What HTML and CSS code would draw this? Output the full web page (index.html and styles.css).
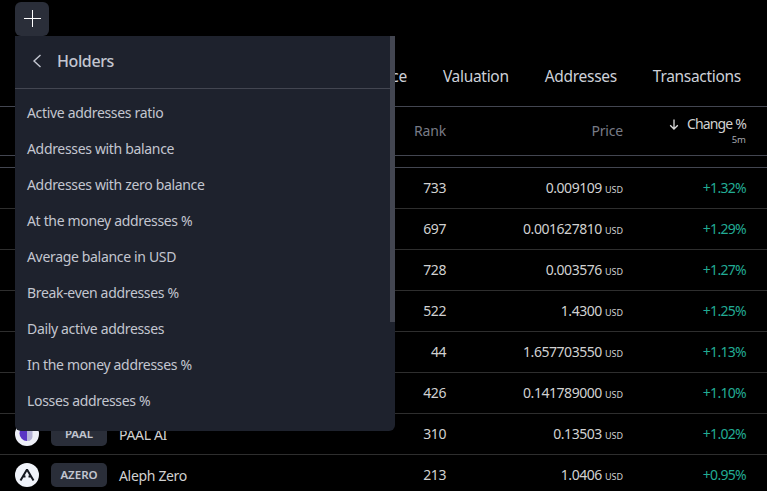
FILE: index.html
```html
<!DOCTYPE html>
<html lang="en">
<head>
<meta charset="utf-8">
<title>Holders</title>
<link rel="stylesheet" href="styles.css">
</head>
<body>
<div class="page">
  <div class="toolbar">
    <button class="add-btn" aria-label="Add">
      <svg width="18" height="18" viewBox="0 0 18 18"><path d="M9.5 0v17M1 8.5h17" stroke="#fff" stroke-width="1" fill="none"/></svg>
    </button>
  </div>
  <nav class="tabs">
    <span class="tab tab-perf">Performance</span>
    <span class="tab">Valuation</span>
    <span class="tab">Addresses</span>
    <span class="tab">Transactions</span>
  </nav>
  <div class="table">
    <div class="row head">
      <span class="c-rank">Rank</span>
      <span class="c-price">Price</span>
      <span class="c-change"><span class="ch-top"><svg class="arrow" width="10" height="11" viewBox="0 0 10 11"><path d="M5 .5v9.5M1.2 6.2 5 10l3.8-3.8" stroke="#dbdbdb" stroke-width="1.3" fill="none"/></svg>Change %</span><small>5m</small></span>
    </div>
    <div class="spacer"></div>
    <div class="row"><span class="c-rank">733</span><span class="c-price">0.009109<i>USD</i></span><span class="c-change up">+1.32%</span></div>
    <div class="row"><span class="c-rank">697</span><span class="c-price">0.001627810<i>USD</i></span><span class="c-change up">+1.29%</span></div>
    <div class="row"><span class="c-rank">728</span><span class="c-price">0.003576<i>USD</i></span><span class="c-change up">+1.27%</span></div>
    <div class="row"><span class="c-rank">522</span><span class="c-price">1.4300<i>USD</i></span><span class="c-change up">+1.25%</span></div>
    <div class="row"><span class="c-rank">44</span><span class="c-price">1.657703550<i>USD</i></span><span class="c-change up">+1.13%</span></div>
    <div class="row"><span class="c-rank">426</span><span class="c-price">0.141789000<i>USD</i></span><span class="c-change up">+1.10%</span></div>
    <div class="row">
      <span class="coin">
        <svg class="logo" width="24" height="24" viewBox="0 0 24 24"><circle cx="12" cy="12" r="12" fill="#eef0f8"/><path d="M12 4a7.5 7.5 0 0 0 0 15z" fill="#5a35c4"/><path d="M12 4h2.5a5 5 0 0 1 3 3v8a5 5 0 0 1-3 4H12z" fill="#b5b3d6"/></svg>
        <b class="tag">PAAL</b><span class="name">PAAL AI</span>
      </span>
      <span class="c-rank">310</span><span class="c-price">0.13503<i>USD</i></span><span class="c-change up">+1.02%</span>
    </div>
    <div class="row">
      <span class="coin">
        <svg class="logo" width="24" height="24" viewBox="0 0 24 24"><circle cx="12" cy="12" r="12" fill="#f0f3fa"/><path d="M12 6.5 18.5 17.5M12 6.5 5.5 17.5M8 13.5h2.5M13.5 13.5H16" stroke="#14171f" stroke-width="2" fill="none"/></svg>
        <b class="tag">AZERO</b><span class="name">Aleph Zero</span>
      </span>
      <span class="c-rank">213</span><span class="c-price">1.0406<i>USD</i></span><span class="c-change up">+0.95%</span>
    </div>
  </div>
  <aside class="menu">
    <header class="menu-head">
      <svg width="18" height="18" viewBox="0 0 18 18"><path d="M12.5 3 6 9l6.5 6" stroke="#c3c6d0" stroke-width="1.4" fill="none"/></svg>
      <span>Holders</span>
    </header>
    <ul class="menu-list">
      <li>Active addresses ratio</li>
      <li>Addresses with balance</li>
      <li>Addresses with zero balance</li>
      <li>At the money addresses %</li>
      <li>Average balance in USD</li>
      <li>Break-even addresses %</li>
      <li>Daily active addresses</li>
      <li>In the money addresses %</li>
      <li>Losses addresses %</li>
    </ul>
    <div class="scrollbar"></div>
  </aside>
</div>
</body>
</html>
```
FILE: styles.css
```css
* { box-sizing: border-box; }
html, body { margin: 0; height: 100%; background: #000; }
body { overflow: hidden; font-family: "Noto Sans", sans-serif; color: #d1d1d1; font-size: 14px; letter-spacing: -0.33px; }
.page { position: relative; width: 767px; height: 491px; overflow: hidden; }
.toolbar { height: 57px; padding: 2px 0 0 15px; }
.add-btn { width: 34px; height: 34px; border: 0; border-radius: 6px; background: #2a2e39; padding: 0; display: flex; align-items: center; justify-content: center; }
.tabs { height: 50px; display: flex; justify-content: flex-end; align-items: center; gap: 36px; padding: 0 26px 11px 0; border-bottom: 1px solid #434651; font-size: 15.5px; letter-spacing: -0.3px; color: #cdd0d8; line-height: 38px; }
.table { display: flex; flex-direction: column; }
.row { height: 41px; display: flex; align-items: center; padding: 0 21px 2px 15px; border-bottom: 1px solid #2e2e2e; }
.row .coin { margin-bottom: -2px; }
.head { height: 49px; color: #787b86; border-bottom-color: #434651; padding-bottom: 2px; }
.spacer { height: 12px; border-bottom: 1px solid #434651; }
.coin { display: flex; align-items: center; width: 0; white-space: nowrap; }
.logo { flex: none; }
.tag { flex: none; margin-left: 12px; width: 56px; height: 24px; border-radius: 5px; background: #2a2e39; font-size: 11.5px; letter-spacing: 0; font-weight: 600; line-height: 24px; color: #c3c6d0; text-align: center; }
.name { margin-left: 12px; color: #d1d1d1; }
.c-rank { margin-left: auto; width: 431px; text-align: right; letter-spacing: -0.45px; }
.c-price { width: 177px; text-align: right; letter-spacing: -0.45px; }
.c-price i { font-style: normal; font-size: 9px; letter-spacing: 0; margin-left: 3px; }
.c-change { width: 123px; text-align: right; letter-spacing: -0.7px; }
.up { color: #22ab94; }
.head .c-rank, .head .c-price { letter-spacing: -0.2px; }
.head .c-change { display: flex; flex-direction: column; align-items: flex-end; color: #d1d1d1; line-height: 16px; padding-top: 3px; letter-spacing: -0.85px; }
.ch-top { display: flex; align-items: center; gap: 8px; }
.head small { font-size: 9.5px; line-height: 14px; margin-top: 1px; letter-spacing: 0; color: #a6a8ae; }
.menu { position: absolute; left: 15px; top: 36px; width: 380px; height: 395px; background: #1e222d; border-radius: 0 0 6px 6px; overflow: hidden; color: #c3c6d0; }
.menu-head { height: 53px; display: flex; align-items: center; gap: 11px; padding: 0 0 2px 13px; border-bottom: 1px solid #434651; margin-right: 5px; font-size: 16px; letter-spacing: -0.4px; font-weight: 500; }
.menu-list { margin: 0; padding: 6px 0 0 12px; list-style: none; }
.menu-list li { height: 36px; line-height: 36px; white-space: nowrap; }
.scrollbar { position: absolute; right: 0; top: 0; width: 5px; height: 286px; background: #434651; }
```
